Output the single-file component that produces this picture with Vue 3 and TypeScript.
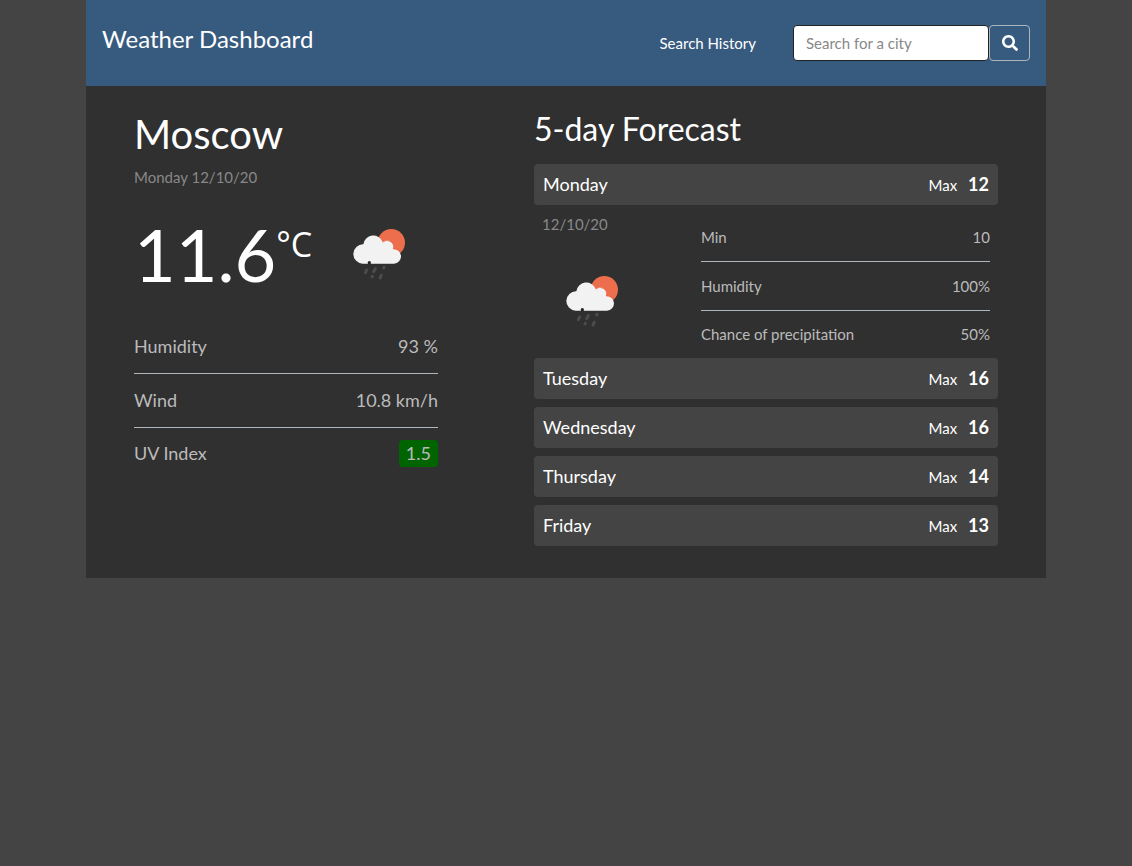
<script setup lang="ts">
import { defineComponent, h, ref } from 'vue'

interface Stat {
  label: string
  value: string
}

interface Day {
  name: string
  date: string
  max: number
  stats: Stat[]
}

const query = ref('')
const openDay = ref('Monday')

const current = [
  { label: 'Humidity', value: '93 %', badge: false },
  { label: 'Wind', value: '10.8 km/h', badge: false },
  { label: 'UV Index', value: '1.5', badge: true },
]

const stats: Stat[] = [
  { label: 'Min', value: '10' },
  { label: 'Humidity', value: '100%' },
  { label: 'Chance of precipitation', value: '50%' },
]

const days: Day[] = [
  { name: 'Monday', date: '12/10/20', max: 12, stats },
  { name: 'Tuesday', date: '13/10/20', max: 16, stats },
  { name: 'Wednesday', date: '14/10/20', max: 16, stats },
  { name: 'Thursday', date: '15/10/20', max: 14, stats },
  { name: 'Friday', date: '16/10/20', max: 13, stats },
]

const cloud =
  'M68 131 A29 29 0 1 1 70 73 A30 30 0 0 1 128 66 A20 20 0 0 1 160 87 A22 22 0 0 1 162 131 Z'

const RainIcon = defineComponent(() => () =>
  h('svg', { viewBox: '36 24 168 168', width: 56, height: 56, role: 'img', 'aria-label': 'Light rain' }, [
    h('circle', { cx: 154, cy: 68, r: 41, fill: '#ec6e4c' }),
    h('path', { d: cloud, fill: '#f2f2f2' }),
    h('path', { d: 'M128 66 A20 20 0 0 1 160 87 A22 22 0 0 1 181 97', fill: 'none', stroke: '#ea5a36', 'stroke-width': 2 }),
    h('circle', { cx: 88, cy: 128, r: 5, fill: '#252525' }),
    h('path', {
      d: 'M80 150 L76 158 M106 146 L101 155 M132 142 L131 144 M97 169 L96 171 M124 166 L120 174',
      stroke: '#4c4c4c',
      'stroke-width': 9,
      'stroke-linecap': 'round',
    }),
  ]),
)

function toggle(name: string) {
  openDay.value = openDay.value === name ? '' : name
}
</script>

<template>
  <div class="dashboard">
    <header class="topbar">
      <h1 class="brand">Weather Dashboard</h1>
      <nav class="actions">
        <a class="history" href="#history">Search History</a>
        <form class="search" @submit.prevent>
          <input v-model="query" type="text" aria-label="Search for a city" placeholder="Search for a city" />
          <button type="submit" aria-label="Search">
            <svg viewBox="0 0 512 512" width="16" height="16" aria-hidden="true">
              <path
                fill="currentColor"
                d="M505 442.7L405.3 343c-4.5-4.5-10.6-7-17-7H372c27.6-35.3 44-79.7 44-128C416 93.1 322.9 0 208 0S0 93.1 0 208s93.1 208 208 208c48.3 0 92.7-16.4 128-44v16.3c0 6.4 2.5 12.5 7 17l99.7 99.7c9.4 9.4 24.6 9.4 33.9 0l28.3-28.3c9.4-9.4 9.4-24.6.1-34zM208 336c-70.7 0-128-57.2-128-128 0-70.7 57.2-128 128-128 70.7 0 128 57.2 128 128 0 70.7-57.2 128-128 128z"
              />
            </svg>
          </button>
        </form>
      </nav>
    </header>

    <main class="content">
      <section class="today">
        <h2 class="city">Moscow</h2>
        <p class="date">Monday 12/10/20</p>
        <div class="now">
          <p class="temp">11.6<span class="unit">°C</span></p>
          <RainIcon />
        </div>
        <dl class="stats large">
          <div v-for="item in current" :key="item.label" class="stat">
            <dt>{{ item.label }}</dt>
            <dd :class="{ badge: item.badge }">{{ item.value }}</dd>
          </div>
        </dl>
      </section>

      <section class="forecast">
        <h2 class="heading">5-day Forecast</h2>
        <div v-for="day in days" :key="day.name" class="day" :class="{ open: openDay === day.name }">
          <button class="day-toggle" type="button" :aria-expanded="openDay === day.name" @click="toggle(day.name)">
            <span class="day-name">{{ day.name }}</span>
            <span class="max">Max <strong>{{ day.max }}</strong></span>
          </button>
          <div v-if="openDay === day.name" class="details">
            <div class="summary">
              <p class="date">{{ day.date }}</p>
              <RainIcon />
            </div>
            <dl class="stats">
              <div v-for="item in day.stats" :key="item.label" class="stat">
                <dt>{{ item.label }}</dt>
                <dd>{{ item.value }}</dd>
              </div>
            </dl>
          </div>
        </div>
      </section>
    </main>
  </div>
</template>

<style>
body {
  margin: 0;
  background: #444;
}
</style>

<style scoped>
* {
  box-sizing: border-box;
}

.dashboard {
  max-width: 960px;
  margin: 0 auto;
  background: #303030;
  color: #fff;
  font-family: Lato, 'Liberation Sans', sans-serif;
  font-size: 15px;
  line-height: 22px;
}

h1,
h2,
p,
dl,
dd {
  margin: 0;
  font-weight: 400;
}

.topbar {
  display: flex;
  align-items: center;
  justify-content: space-between;
  padding: 25px 16px;
  background: #375a7f;
}

.brand {
  margin-bottom: 8px;
  font-size: 24px;
  line-height: 28px;
}

.actions {
  display: flex;
  align-items: center;
  gap: 37px;
}

.history {
  color: #fff;
  text-decoration: none;
}

.search {
  display: flex;
}

.search input {
  width: 196px;
  height: 36px;
  padding: 0 12px;
  border: 1px solid #222;
  border-radius: 4px;
  background: #fff;
  color: #444;
  font: inherit;
}

.search input::placeholder {
  color: #888;
  opacity: 1;
}

.search button {
  display: flex;
  align-items: center;
  justify-content: center;
  width: 41px;
  height: 36px;
  padding: 0;
  border: 1px solid #adb5bd;
  border-radius: 4px;
  background: transparent;
  color: #fff;
}

.content {
  display: grid;
  grid-template-columns: 19fr 29fr;
  gap: 96px;
  padding: 24px 48px 32px;
}

.city {
  font-size: 40px;
  line-height: 48px;
}

.date {
  color: #888;
}

.today > .date {
  margin-top: 8px;
}

.now {
  display: flex;
  align-items: center;
  gap: 40px;
  height: 100px;
  margin: 16px 0;
}

.now svg {
  margin-top: 4px;
}

.temp {
  display: flex;
  font-size: 72px;
  line-height: 96px;
}

.unit {
  font-family: 'Open Sans', 'Noto Sans', sans-serif;
  font-size: 34px;
  line-height: 77px;
}

.stat {
  display: flex;
  align-items: center;
  justify-content: space-between;
  padding: 12px 0;
  color: #bbb;
  line-height: 24px;
}

.stat:not(:last-child) {
  border-bottom: 1px solid #adb5bd;
}

.stat:last-child {
  padding-top: 11px;
}

.large .stat {
  font-size: 18px;
  line-height: 29px;
}

.large .badge {
  padding: 0 7px;
  border-radius: 4px;
  background: #006400;
  line-height: 27px;
}

.heading {
  margin-bottom: 16px;
  font-size: 32px;
  line-height: 38px;
}

.day + .day {
  margin-top: 8px;
}

.day.open + .day {
  margin-top: 0;
}

.day-toggle {
  display: flex;
  align-items: baseline;
  justify-content: space-between;
  width: 100%;
  height: 41px;
  padding: 9px 9px 0;
  border: 0;
  border-radius: 4px;
  background: #444;
  color: #fff;
  font: inherit;
}

.day-name {
  font-size: 18px;
}

.max {
  display: flex;
  align-items: baseline;
  gap: 11px;
}

.max strong {
  font-size: 18px;
}

.details {
  display: grid;
  grid-template-columns: 11fr 20fr;
  padding: 8px 8px 0;
}

.summary svg {
  display: block;
  margin: 40px 0 0 23px;
}
</style>
